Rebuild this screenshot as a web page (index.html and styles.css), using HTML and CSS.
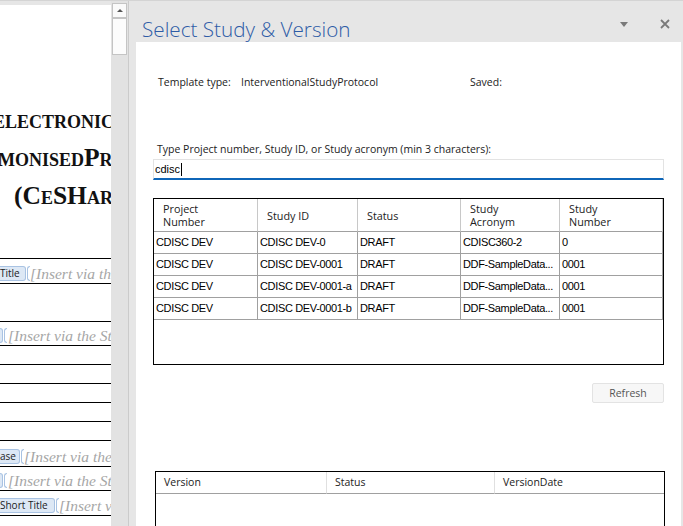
FILE: index.html
```html
<!DOCTYPE html>
<html>
<head>
<meta charset="utf-8">
<link rel="stylesheet" href="styles.css">
</head>
<body>
<div class="app">
  <div class="doc">
    <div class="page">
      <div class="title-block">
        <div class="tl l1">electronic</div>
        <div class="tl l2">monisedProtocol</div>
        <div class="tl l3">(CeSHarP)</div>
      </div>
      <div class="drow sep0"></div>
      <div class="drow h24"><span class="tag t-title">Title</span><span class="brk"></span><span class="ins">[Insert via the Study</span></div>
      <div class="drow h37"></div>
      <div class="drow h23"><span class="tag t-tail"></span><span class="brk"></span><span class="ins ins-near">[Insert via the Study</span></div>
      <div class="drow h18"></div>
      <div class="drow h18"></div>
      <div class="drow h18"></div>
      <div class="drow h18"></div>
      <div class="drow h18"></div>
      <div class="drow h25"><span class="tag t-ase">ase</span><span class="brk"></span><span class="ins">[Insert via the Study</span></div>
      <div class="drow h23"><span class="tag t-tail"></span><span class="brk"></span><span class="ins ins-near">[Insert via the Study</span></div>
      <div class="drow h24"><span class="tag t-short">Short Title</span><span class="brk"></span><span class="ins">[Insert via the Study</span></div>
    </div>
  </div>
  <div class="vscroll">
    <div class="sb-up"><span class="sb-arrow"></span></div>
    <div class="sb-thumb"></div>
  </div>
  <div class="pane">
    <div class="pane-head">
      <div class="pane-title">Select Study &amp; Version</div>
      <span class="pin"></span>
      <svg class="close" width="10" height="10" viewBox="0 0 10 10"><path d="M1 1 L9 9 M9 1 L1 9" stroke="#7a7a7a" stroke-width="1.8" fill="none"/></svg>
    </div>
    <div class="pane-body">
      <div class="meta-row">
        <span>Template type:</span>
        <span>InterventionalStudyProtocol</span>
        <span>Saved:</span>
      </div>
      <div class="search-label">Type Project number, Study ID, or Study acronym (min 3 characters):</div>
      <div class="search-input"><span class="typed">cdisc</span><span class="caret"></span></div>
      <div class="grid">
        <div class="grid-row head">
          <div class="hc">Project<br>Number</div>
          <div class="hc">Study ID</div>
          <div class="hc">Status</div>
          <div class="hc">Study<br>Acronym</div>
          <div class="hc">Study<br>Number</div>
        </div>
        <div class="grid-row">
          <div class="c">CDISC DEV</div><div class="c">CDISC DEV-0</div><div class="c">DRAFT</div><div class="c">CDISC360-2</div><div class="c">0</div>
        </div>
        <div class="grid-row">
          <div class="c">CDISC DEV</div><div class="c">CDISC DEV-0001</div><div class="c">DRAFT</div><div class="c">DDF-SampleData...</div><div class="c">0001</div>
        </div>
        <div class="grid-row">
          <div class="c">CDISC DEV</div><div class="c">CDISC DEV-0001-a</div><div class="c">DRAFT</div><div class="c">DDF-SampleData...</div><div class="c">0001</div>
        </div>
        <div class="grid-row">
          <div class="c">CDISC DEV</div><div class="c">CDISC DEV-0001-b</div><div class="c">DRAFT</div><div class="c">DDF-SampleData...</div><div class="c">0001</div>
        </div>
      </div>
      <div class="refresh-row"><button class="refresh">Refresh</button></div>
      <div class="versions">
        <div class="vhead">
          <div class="vh">Version</div>
          <div class="vh">Status</div>
          <div class="vh">VersionDate</div>
        </div>
      </div>
    </div>
  </div>
</div>
</body>
</html>
```

FILE: styles.css
```css
html, body {
  margin: 0;
  padding: 0;
}
body {
  width: 683px;
  height: 526px;
  overflow: hidden;
  background: #e6e6e6;
}
.app {
  display: flex;
  height: 526px;
  box-sizing: border-box;
  border-top: 1px solid #d4d4d4;
}

/* ---------- document ---------- */
.doc {
  flex: 0 0 111px;
  padding-top: 4px;
  overflow: hidden;
}
.page {
  background: #fff;
  height: 100%;
  overflow: hidden;
}
.title-block {
  padding-top: 96px;
}
.tl {
  font-family: "Liberation Serif", serif;
  font-weight: bold;
  font-size: 25.5px;
  line-height: 38px;
  font-variant: small-caps;
  white-space: nowrap;
  color: #111;
}
.l1 { margin-left: -7px; }
.l2 { margin-left: -2px; }
.l3 { margin-left: 14px; }

.drow {
  border-bottom: 1px solid #000;
  display: flex;
  align-items: flex-end;
  padding-bottom: 2px;
  box-sizing: content-box;
  white-space: nowrap;
  overflow: hidden;
}
.sep0 { height: 41px; }
.h24 { height: 22px; }
.h37 { height: 35px; }
.h23 { height: 21px; }
.h18 { height: 16px; }
.h25 { height: 23px; }

.tag {
  flex: 0 0 auto;
  height: 15px;
  box-sizing: border-box;
  background: #dde8f5;
  border: 1px solid #a9c3e3;
  border-left: none;
  border-radius: 0 3px 3px 0;
  font-family: "Open Sans", sans-serif;
  font-size: 10px;
  line-height: 13px;
  color: #222;
  padding-right: 2px;
}
.t-title { width: 26px; }
.t-ase { width: 20px; }
.t-short { width: 55px; }
.t-tail { width: 3px; padding: 0; }
.brk {
  flex: 0 0 auto;
  width: 3px;
  height: 15px;
  margin-left: 1px;
  box-sizing: border-box;
  border: 1px solid #a9c3e3;
  border-right: none;
  border-radius: 4px 0 0 4px;
}
.ins {
  font-family: "Liberation Serif", serif;
  font-style: italic;
  font-size: 15.5px;
  line-height: 15px;
  color: #a6a6a6;
  margin-left: 0;
}
.ins-near { margin-left: 1px; }

/* ---------- scrollbar ---------- */
.vscroll {
  flex: 0 0 18px;
  background: #e2e2e2;
  border-right: 1px solid #cbcbcb;
  padding: 2px 0 0 1px;
  box-sizing: border-box;
}
.sb-up {
  width: 15px;
  height: 15px;
  box-sizing: border-box;
  background: #fafafa;
  border: 1px solid #c4c4c4;
  display: flex;
  align-items: center;
  justify-content: center;
}
.sb-arrow {
  width: 0;
  height: 0;
  border-left: 3px solid transparent;
  border-right: 3px solid transparent;
  border-bottom: 3px solid #555;
}
.sb-thumb {
  width: 15px;
  height: 37px;
  box-sizing: border-box;
  background: #fcfcfc;
  border: 1px solid #c4c4c4;
}

/* ---------- task pane ---------- */
.pane {
  flex: 1;
  display: flex;
  flex-direction: column;
  background: #e6e6e6;
  min-width: 0;
}
.pane-head {
  height: 41px;
  flex: 0 0 41px;
  display: flex;
  align-items: flex-start;
  padding: 0 13px 0 13px;
  box-sizing: border-box;
}
.pane-title {
  margin-top: 14px;
  font-family: "Open Sans", sans-serif;
  font-weight: 300;
  font-size: 20.7px;
  line-height: 28px;
  color: #2e5ca6;
  white-space: nowrap;
}
.pin {
  margin-left: auto;
  margin-top: 21px;
  width: 0;
  height: 0;
  border-left: 4.5px solid transparent;
  border-right: 4.5px solid transparent;
  border-top: 5px solid #7a7a7a;
}
.close {
  margin-top: 18px;
  margin-left: 32px;
}
.pane-body {
  flex: 1;
  background: #fff;
  margin: 0 2px 0 7px;
  font-family: "Open Sans", sans-serif;
  font-size: 10.5px;
  color: #222;
}
.meta-row {
  margin-top: 33px;
  padding-left: 22px;
  display: grid;
  grid-template-columns: 83px 229px auto;
  line-height: 14px;
  white-space: nowrap;
}
.search-label {
  margin-top: 53px;
  padding-left: 21px;
  line-height: 14px;
  white-space: nowrap;
}
.search-input {
  margin: 3px 0 0 17px;
  width: 511px;
  height: 21px;
  box-sizing: border-box;
  border: 1px solid #e3e3e3;
  border-bottom: 2px solid #0f66b8;
  display: flex;
  align-items: center;
  padding-left: 1px;
}
.typed {
  font-family: "Liberation Sans", sans-serif;
  font-size: 11px;
  color: #000;
}
.caret {
  width: 1px;
  height: 13px;
  background: #000;
  margin-left: 1px;
}

.grid {
  margin: 18px 0 0 17px;
  width: 511px;
  height: 167px;
  box-sizing: border-box;
  border: 1px solid #000;
}
.grid-row {
  display: grid;
  grid-template-columns: 104px 100px 103px 99px 103px;
  height: 22px;
}
.grid-row.head {
  height: 33px;
}
.hc {
  box-sizing: border-box;
  border-right: 1px solid #c8c8c8;
  border-bottom: 1px solid #a0a0a0;
  padding-left: 9px;
  display: flex;
  align-items: center;
  font-size: 10.8px;
  line-height: 13px;
  color: #222;
}
.c {
  box-sizing: border-box;
  border-right: 1px solid #a0a0a0;
  border-bottom: 1px solid #a0a0a0;
  padding-left: 2px;
  font-family: "Liberation Sans", sans-serif;
  font-size: 11px;
  letter-spacing: -0.35px;
  line-height: 21px;
  color: #000;
  white-space: nowrap;
  overflow: hidden;
}

.refresh-row {
  display: flex;
  justify-content: flex-end;
  margin-top: 18px;
  padding-right: 17px;
}
.refresh {
  width: 72px;
  height: 20px;
  box-sizing: border-box;
  background: #f7f7f7;
  border: 1px solid #e3e3e3;
  border-radius: 2px;
  font-family: "Open Sans", sans-serif;
  font-size: 10.5px;
  color: #555;
  padding: 0;
}

.versions {
  margin: 68px 0 0 19px;
  width: 510px;
  height: 80px;
  box-sizing: border-box;
  border: 1px solid #000;
}
.vhead {
  display: grid;
  grid-template-columns: 171px 168px auto;
  height: 22px;
}
.vh {
  box-sizing: border-box;
  border-right: 1px solid #e0e0e0;
  border-bottom: 1px solid #a0a0a0;
  padding-left: 8px;
  line-height: 21px;
  white-space: nowrap;
}
.vh:last-child { border-right: none; }
```
